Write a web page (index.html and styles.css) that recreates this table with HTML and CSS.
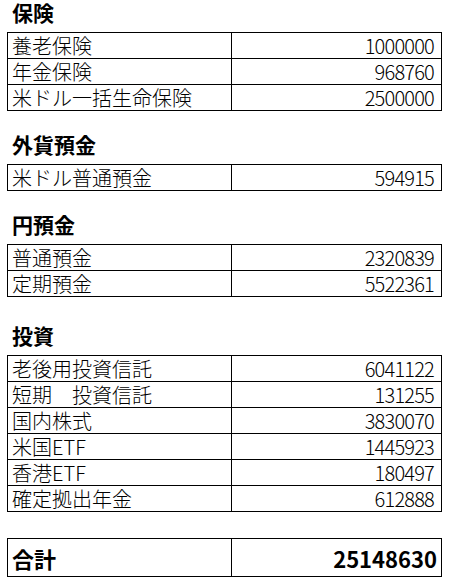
FILE: index.html
```html
<!DOCTYPE html>
<html lang="ja">
<head>
<meta charset="utf-8">
<link rel="stylesheet" href="styles.css">
</head>
<body>
<main class="sheet">
  <section class="group first">
    <h2 class="title">保険</h2>
    <table class="grid tight">
      <tr><td class="label">養老保険</td><td class="num">1000000</td></tr>
      <tr><td class="label">年金保険</td><td class="num">968760</td></tr>
      <tr><td class="label">米ドル一括生命保険</td><td class="num">2500000</td></tr>
    </table>
  </section>
  <section class="group">
    <h2 class="title">外貨預金</h2>
    <table class="grid">
      <tr><td class="label">米ドル普通預金</td><td class="num">594915</td></tr>
    </table>
  </section>
  <section class="group">
    <h2 class="title">円預金</h2>
    <table class="grid">
      <tr><td class="label">普通預金</td><td class="num">2320839</td></tr>
      <tr><td class="label">定期預金</td><td class="num">5522361</td></tr>
    </table>
  </section>
  <section class="group wide">
    <h2 class="title">投資</h2>
    <table class="grid">
      <tr><td class="label">老後用投資信託</td><td class="num">6041122</td></tr>
      <tr><td class="label">短期&#12288;投資信託</td><td class="num">131255</td></tr>
      <tr><td class="label">国内株式</td><td class="num">3830070</td></tr>
      <tr><td class="label">米国ETF</td><td class="num">1445923</td></tr>
      <tr><td class="label">香港ETF</td><td class="num">180497</td></tr>
      <tr><td class="label">確定拠出年金</td><td class="num">612888</td></tr>
    </table>
  </section>
  <section class="total-block">
    <table class="grid total">
      <tr><td class="label">合計</td><td class="num">25148630</td></tr>
    </table>
  </section>
</main>
</body>
</html>
```
FILE: styles.css
```css
html, body {
  margin: 0;
  padding: 0;
  background: #ffffff;
}

body {
  font-family: "Noto Sans CJK JP", "Noto Sans", sans-serif;
  color: #000000;
}

.sheet {
  padding: 2px 12px 0 7px;
  width: 435px;
}

.group {
  margin-top: 23px;
}

.group.first {
  margin-top: 0;
}

.group.wide {
  margin-top: 28px;
}

.title {
  margin: 0 0 9px 5px;
  font-size: 21px;
  line-height: 21px;
  font-weight: 700;
}

.grid {
  border-collapse: collapse;
  width: 435px;
  table-layout: fixed;
}

.grid td {
  border: 1px solid #000000;
  padding: 0;
  height: 26px;
  box-sizing: border-box;
  vertical-align: middle;
  font-size: 20px;
  line-height: 25px;
  font-weight: 300;
  white-space: nowrap;
}

.grid.tight td {
  height: 25.34px;
}

.grid td.label {
  width: 224px;
  padding-left: 4px;
}

.grid td.num {
  text-align: right;
  padding-right: 7px;
  letter-spacing: -0.8px;
}

.total-block {
  margin-top: 26px;
}

.grid.total td {
  height: 38px;
  vertical-align: middle;
  font-size: 22px;
  line-height: 36px;
  font-weight: 700;
}

.grid.total td.num {
  padding-right: 4px;
  letter-spacing: 0;
}
```
